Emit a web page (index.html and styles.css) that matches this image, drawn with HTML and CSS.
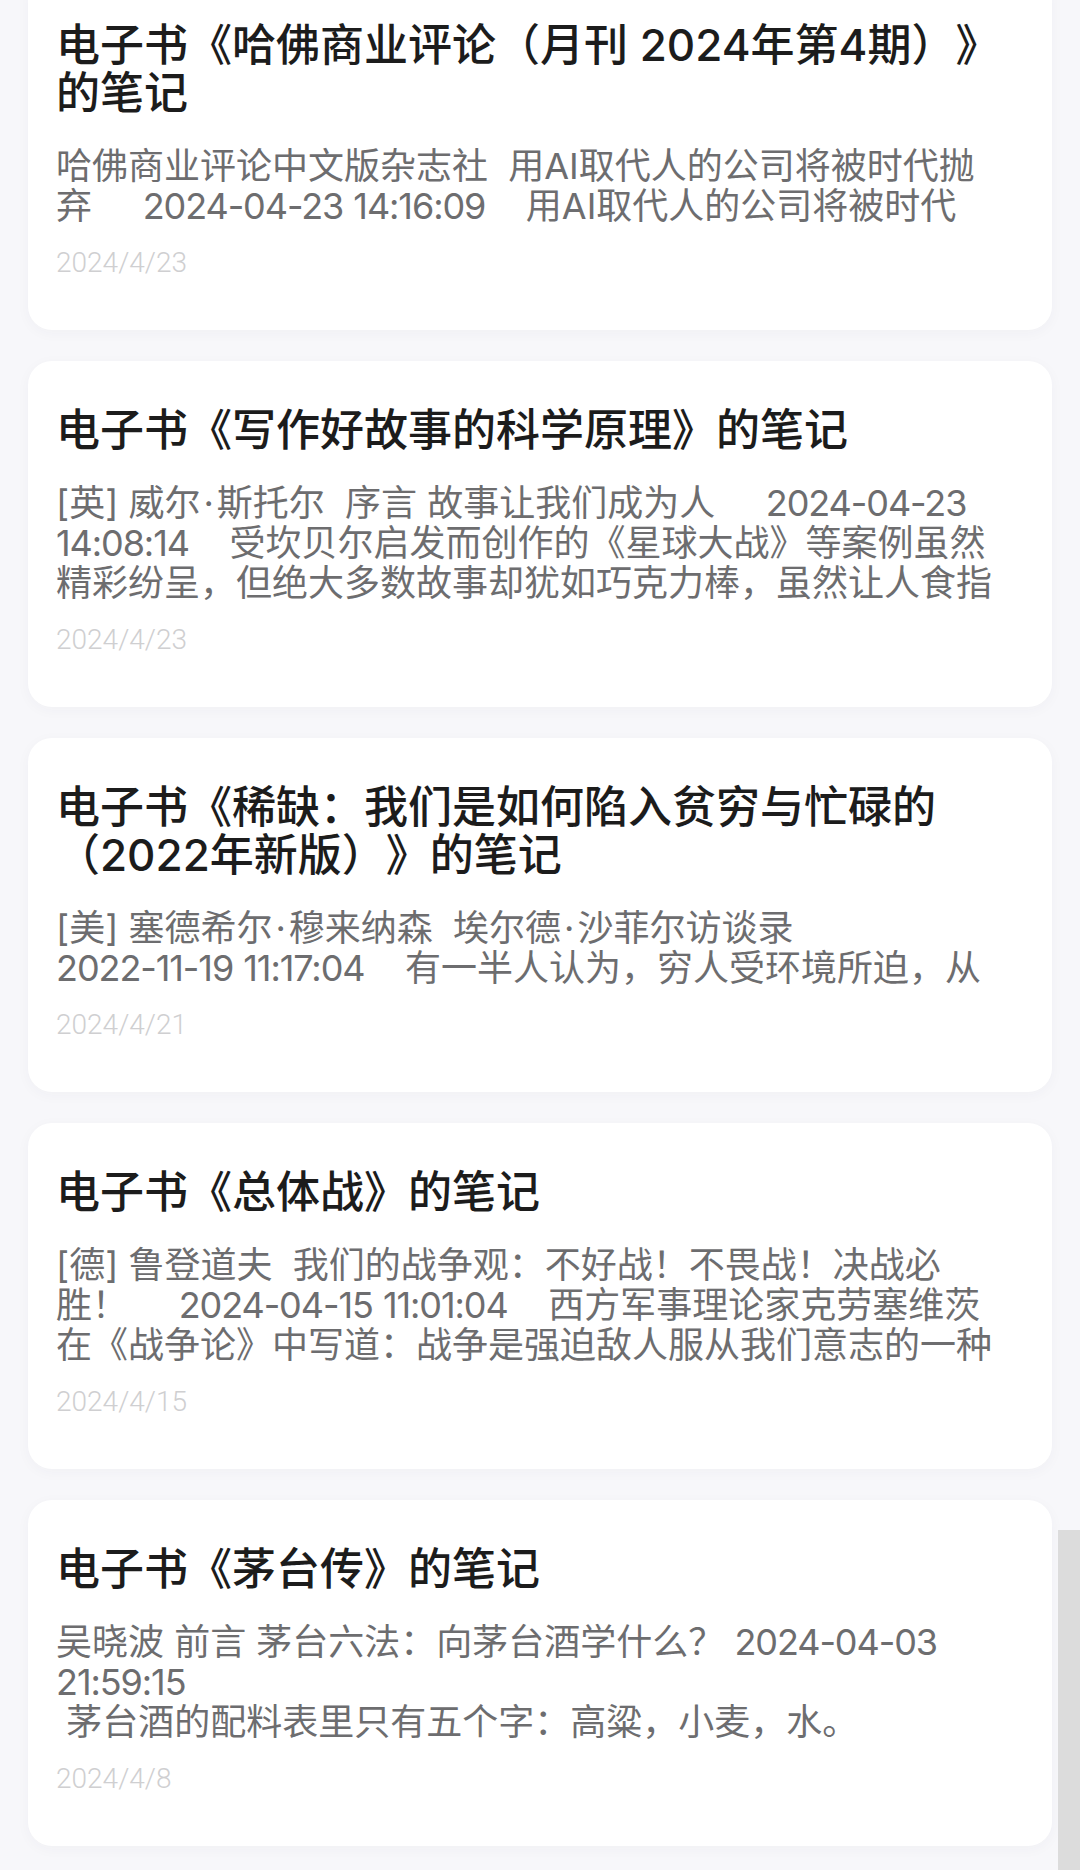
FILE: index.html
```html
<!DOCTYPE html>
<html lang="zh-CN">
<head>
<meta charset="utf-8">
<title>笔记</title>
<link rel="stylesheet" href="styles.css">
</head>
<body>
<main class="note-list">
  <article class="note-card">
    <h2 class="note-title">电子书《哈佛商业评论（月刊 2024年第4期）》的笔记</h2>
    <p class="note-body">哈佛商业评论中文版杂志社  用AI取代人的公司将被时代抛弃     <span class="nw">2024-04-23</span> <span class="nw">14:16:09</span>    用AI取代人的公司将被时代</p>
    <div class="note-date">2024/4/23</div>
  </article>
  <article class="note-card">
    <h2 class="note-title">电子书《写作好故事的科学原理》的笔记</h2>
    <p class="note-body">[英] 威尔<span class="mid-dot">·</span>斯托尔  序言 故事让我们成为人     <span class="nw">2024-04-23</span> <span class="nw">14:08:14</span>    受坎贝尔启发而创作的《星球大战》等案例虽然精彩纷呈，但绝大多数故事却犹如巧克力棒，虽然让人食指</p>
    <div class="note-date">2024/4/23</div>
  </article>
  <article class="note-card">
    <h2 class="note-title">电子书《稀缺：我们是如何陷入贫穷与忙碌的（2022年新版）》的笔记</h2>
    <p class="note-body">[美] 塞德希尔<span class="mid-dot">·</span>穆来纳森  埃尔德<span class="mid-dot">·</span>沙菲尔访谈录     <span class="nw">2022-11-19</span> <span class="nw">11:17:04</span>    有一半人认为，穷人受环境所迫，从</p>
    <div class="note-date">2024/4/21</div>
  </article>
  <article class="note-card">
    <h2 class="note-title">电子书《总体战》的笔记</h2>
    <p class="note-body">[德] 鲁登道夫  我们的战争观：不好战！不畏战！决战必胜！     <span class="nw">2024-04-15</span> <span class="nw">11:01:04</span>    西方军事理论家克劳塞维茨在《战争论》中写道：战争是强迫敌人服从我们意志的一种</p>
    <div class="note-date">2024/4/15</div>
  </article>
  <article class="note-card">
    <h2 class="note-title">电子书《茅台传》的笔记</h2>
    <p class="note-body">吴晓波 前言 茅台六法：向茅台酒学什么？ <span class="nw">2024-04-03</span> <span class="nw">21:59:15</span>
 茅台酒的配料表里只有五个字：高粱，小麦，水。</p>
    <div class="note-date">2024/4/8</div>
  </article>
</main>
<div class="scroll-thumb"></div>
</body>
</html>
```

FILE: styles.css
```css
html, body {
  margin: 0;
  padding: 0;
}

body {
  background: #f7f7fa;
  font-family: Inter, "Noto Sans CJK SC", "Noto Sans", sans-serif;
  text-spacing-trim: space-all;
  width: 1080px;
  height: 1870px;
  overflow: hidden;
  position: relative;
}

.note-list {
  display: flex;
  flex-direction: column;
  gap: 31px;
  padding: 0 28px;
  margin-top: -24px;
}

.note-card {
  background: #ffffff;
  border-radius: 24px;
  padding: 45px 47px 50px 28px;
  box-shadow: 0 3px 14px rgba(60, 60, 90, 0.035);
}

.note-title {
  margin: 0;
  font-size: 44px;
  line-height: 48px;
  font-weight: 500;
  color: #1c1c1c;
}

.note-body {
  margin: 29px 0 0;
  font-size: 36px;
  line-height: 40px;
  font-weight: 400;
  color: #6d6d6f;
  white-space: pre-wrap;
}

.nw {
  white-space: nowrap;
  letter-spacing: -0.03em;
}

.mid-dot {
  padding: 0 3px;
}

.note-date {
  margin-top: 20px;
  font-family: Roboto, "Noto Sans CJK SC", sans-serif;
  font-size: 28px;
  line-height: 34px;
  font-weight: 300;
  color: #cfcfd1;
}

.scroll-thumb {
  position: absolute;
  right: 0;
  top: 1530px;
  bottom: 0;
  width: 22px;
  background: #dcdcdc;
}
```
